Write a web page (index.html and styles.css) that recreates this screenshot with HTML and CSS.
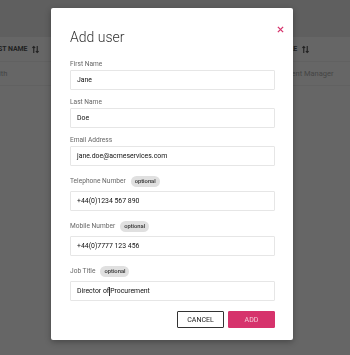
FILE: index.html
```html
<!DOCTYPE html>
<html lang="en">
<head>
    <meta charset="UTF-8">
    <meta name="viewport" content="width=device-width, initial-scale=1.0">
    <title>users</title>
    <link rel="stylesheet" href="styles.css">
</head>
<body>
    <div class="page">
        <div class="table">
            <div class="row head">
                <div class="cell first">FIRST NAME
                    <svg class="sort" viewBox="0 0 8 9"><path d="M2 8.5V1M0.4 2.6L2 1l1.6 1.6M6 0.5V8M4.4 6.4L6 8l1.6-1.6"/></svg>
                </div>
                <div class="cell job">JOB TITLE
                    <svg class="sort" viewBox="0 0 8 9"><path d="M2 8.5V1M0.4 2.6L2 1l1.6 1.6M6 0.5V8M4.4 6.4L6 8l1.6-1.6"/></svg>
                </div>
            </div>
            <div class="row">
                <div class="cell first">Smith</div>
                <div class="cell job">Procurement Manager</div>
            </div>
        </div>
    </div>

    <div class="modal">
        <button class="close" aria-label="close">
            <svg viewBox="0 0 8 8"><path d="M1 1l6 6M7 1L1 7"/></svg>
        </button>
        <h2 class="title">Add user</h2>

        <div class="field">
            <label>First Name</label>
            <div class="input">Jane</div>
        </div>
        <div class="field">
            <label>Last Name</label>
            <div class="input">Doe</div>
        </div>
        <div class="field">
            <label>Email Address</label>
            <div class="input">jane.doe@acmeservices.com</div>
        </div>
        <div class="field">
            <label class="opt">Telephone Number <span class="pill">optional</span></label>
            <div class="input">+44(0)1234 567 890</div>
        </div>
        <div class="field">
            <label class="opt">Mobile Number <span class="pill">optional</span></label>
            <div class="input">+44(0)7777 123 456</div>
        </div>
        <div class="field">
            <label class="opt">Job Title <span class="pill">optional</span></label>
            <div class="input">Director of <span class="caret"></span>Procurement</div>
        </div>

        <div class="actions">
            <button class="btn cancel">CANCEL</button>
            <button class="btn add">ADD</button>
        </div>
    </div>
</body>
</html>
```

FILE: styles.css
```css
*{
    margin: 0;
    padding: 0;
    box-sizing: border-box;
}
body{
    background-color: #5f5f5f;
    font-family: Roboto, "Liberation Sans", sans-serif;
    height: 355px;
    overflow: hidden;
}
.page{
    padding-top: 37px;
}
.table{
    background-color: #666;
    height: 318px;
}
.row{
    display: flex;
    height: 24px;
    align-items: center;
    border-bottom: 1px solid #616161;
    font-size: 7.5px;
    color: #454545;
    & .cell{
        white-space: nowrap;
        display: flex;
        align-items: center;
    }
    & .first{
        margin-left: -12px;
        width: 271px;
    }
}
.head{
    height: 25px;
    color: #222;
    font-size: 7px;
    font-weight: 700;
    letter-spacing: -0.1px;
    & .job{
        margin-left: 6px;
    }
}
.sort{
    width: 7px;
    height: 9px;
    margin-left: 5px;
    fill: none;
    stroke: #222;
    stroke-width: 1.3;
}

.modal{
    position: fixed;
    left: 51px;
    top: 8px;
    width: 242px;
    background: #fff;
    border-radius: 2px;
    box-shadow: 0 2px 6px rgba(0, 0, 0, 0.3);
    padding: 19px 18px 12px 19px;
}
.close{
    position: absolute;
    top: 18px;
    right: 9px;
    width: 7px;
    height: 7px;
    border: none;
    background: none;
    & svg{
        width: 7px;
        height: 7px;
        fill: none;
        stroke: #d6336c;
        stroke-width: 1.5;
        display: block;
    }
}
.title{
    font-size: 14px;
    font-weight: 300;
    color: #333;
    line-height: 20px;
    margin-bottom: 12px;
}
.field{
    margin-bottom: 7px;
    & label{
        display: flex;
        align-items: center;
        height: 10px;
        margin-bottom: 1px;
        font-size: 6.6px;
        color: #666;
    }
    & label.opt{
        height: 16px;
        margin-bottom: 2px;
    }
}
.pill{
    display: inline-block;
    margin-left: 5px;
    background: #e0e0e0;
    color: #333;
    font-size: 5.8px;
    font-weight: 500;
    line-height: 11px;
    height: 11px;
    padding: 0 4px;
    border-radius: 6px;
}
.input{
    height: 20px;
    border: 1px solid #e6e6e6;
    border-radius: 1px;
    padding: 0 6px;
    display: flex;
    align-items: center;
    font-size: 6.9px;
    color: #111;
}
.caret{
    display: inline-block;
    width: 1px;
    height: 9px;
    background: #333;
}
.actions{
    display: flex;
    justify-content: flex-end;
    gap: 4px;
    margin-top: 10px;
}
.btn{
    width: 47px;
    height: 17px;
    font-family: Roboto, "Liberation Sans", sans-serif;
    font-size: 7px;
    border-radius: 1px;
}
.cancel{
    background: #fff;
    border: 1px solid #333;
    color: #222;
}
.add{
    background: #d6336c;
    border: 1px solid #d6336c;
    color: #f6c9d8;
}
```
